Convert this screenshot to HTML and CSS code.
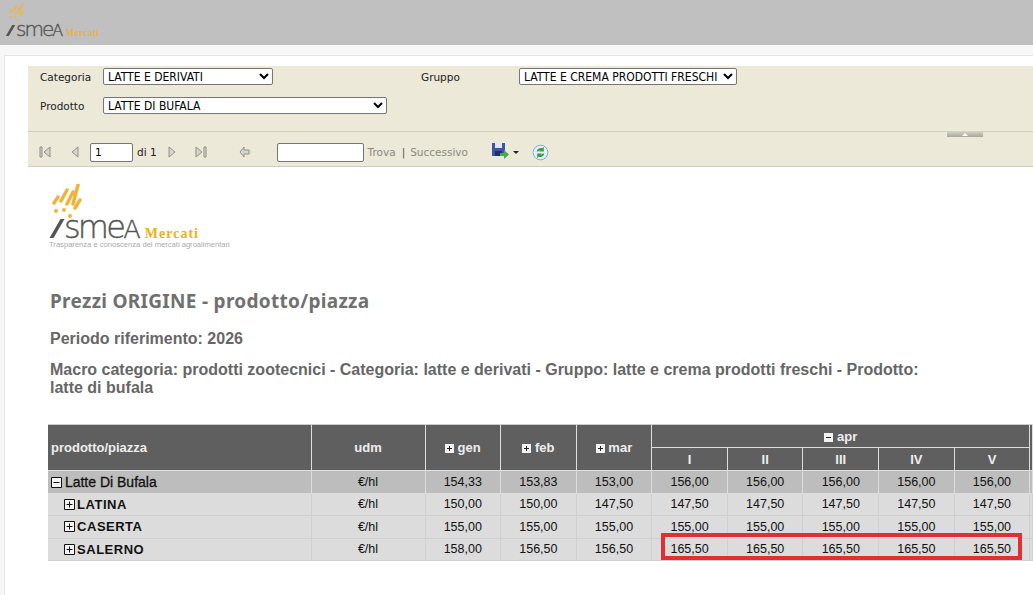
FILE: index.html
```html
<!DOCTYPE html>
<html lang="en">
<head>
  <meta charset="UTF-8">
  <title>Ismea Mercati</title>
  <link rel="stylesheet" href="styles.css">
</head>
<body>

  <header class="topbar">
    <div class="logo logo-small">
      <svg class="logo-rays" viewBox="0 0 32 36">
        <path d="M3 19 L7 13 M10 17 L16 6 M16 20 L22 8 M22 20 L27 1 M24 24 L29 16" />
        <circle cx="5" cy="27" r="2" /><circle cx="13" cy="26" r="2" /><circle cx="19" cy="32" r="2" />
      </svg>
      <div class="logo-line">
        <span class="logo-word"><i class="logo-slash"></i>sme<span class="logo-a">A</span></span>
        <span class="logo-mercati">Mercati</span>
      </div>
    </div>
  </header>

  <main class="page">
    <div class="panel">
      <section class="params">
        <label class="param-label">Categoria</label>
        <div class="param-field"><select class="sel sel-cat"><option>LATTE E DERIVATI</option></select></div>
        <label class="param-label">Gruppo</label>
        <div class="param-field"><select class="sel sel-gruppo"><option>LATTE E CREMA PRODOTTI FRESCHI</option></select></div>
        <label class="param-label">Prodotto</label>
        <div class="param-field"><select class="sel sel-prod"><option>LATTE DI BUFALA</option></select></div>
        <span class="collapse-tab"></span>
      </section>

      <nav class="toolbar">
        <svg class="tool-icon first" viewBox="0 0 14 14"><path class="bar" d="M2 2h2v10H2z"/><path class="arrow" d="M12 2v10L6 7z"/></svg>
        <svg class="tool-icon prev" viewBox="0 0 14 14"><path class="arrow" d="M10 2v10L4 7z"/></svg>
        <input class="page-input" type="text" value="1">
        <span class="page-of">di 1</span>
        <svg class="tool-icon next" viewBox="0 0 14 14"><path class="arrow" d="M4 2v10l6-5z"/></svg>
        <svg class="tool-icon last" viewBox="0 0 14 14"><path class="arrow" d="M2 2v10l6-5z"/><path class="bar" d="M10 2h2v10h-2z"/></svg>
        <svg class="tool-icon back" viewBox="0 0 14 14"><path class="arrow" d="M6 2v3h5v4H6v3L2 7z"/></svg>
        <input class="find-input" type="text">
        <span class="find-link">Trova</span>
        <span class="find-sep">|</span>
        <span class="find-link">Successivo</span>
        <svg class="save-icon" viewBox="0 0 18 18">
          <path fill="#3f54a8" d="M1 1h13v13H1z"/>
          <path fill="#dfe6f5" d="M4 1h7v5H4z"/>
          <path fill="#23306e" d="M4 9h7v5H4z"/>
          <path fill="#4ea84a" d="M9 11h4V8l5 4.500-5 4.500v-3H9z"/>
        </svg>
        <span class="caret"></span>
        <svg class="refresh-icon" viewBox="0 0 18 18">
          <circle cx="9" cy="9" r="7.800" fill="#e4eef8" stroke="#7fa6d6" />
          <path fill="#35a040" d="M5 8a4.500 4.500 0 0 1 6-3.500L12.500 3v5h-5l1.500-1.500A2.500 2.500 0 0 0 6.800 8z"/>
          <path fill="#35a040" d="M13 10a4.500 4.500 0 0 1-6 3.500L5.500 15v-5h5L9 11.500a2.500 2.500 0 0 0 2.200-1.500z"/>
        </svg>
      </nav>

      <section class="report">
        <div class="logo logo-big">
          <svg class="logo-rays" viewBox="0 0 32 36">
            <path d="M3 19 L7 13 M10 17 L16 6 M16 20 L22 8 M22 20 L27 1 M24 24 L29 16" />
            <circle cx="5" cy="27" r="2" /><circle cx="13" cy="26" r="2" /><circle cx="19" cy="32" r="2" />
          </svg>
          <div class="logo-line">
            <span class="logo-word"><i class="logo-slash"></i>sme<span class="logo-a">A</span></span>
            <span class="logo-mercati">Mercati</span>
          </div>
          <div class="logo-tag">Trasparenza e conoscenza dei mercati agroalimentari</div>
        </div>

        <h1 class="rep-title">Prezzi ORIGINE - prodotto/piazza</h1>
        <h2 class="rep-sub">Periodo riferimento: 2026</h2>
        <h2 class="rep-sub rep-macro">Macro categoria: prodotti zootecnici - Categoria: latte e derivati - Gruppo: latte e crema prodotti freschi - Prodotto: latte di bufala</h2>

        <div class="table-wrap">
          <table class="prices">
            <colgroup>
              <col class="c-name"><col class="c-udm">
              <col class="c-m"><col class="c-m"><col class="c-m">
              <col class="c-m"><col class="c-m"><col class="c-m"><col class="c-m"><col class="c-m">
              <col class="c-rest">
            </colgroup>
            <thead>
              <tr>
                <th rowspan="2" class="th-name">prodotto/piazza</th>
                <th rowspan="2">udm</th>
                <th rowspan="2"><svg class="tg tg-head" viewBox="0 0 9 9"><path d="M0 0h9v9H0z"/><path class="tg-mark" d="M2 4h5v1H2zM4 2h1v5H4z"/></svg> gen</th>
                <th rowspan="2"><svg class="tg tg-head" viewBox="0 0 9 9"><path d="M0 0h9v9H0z"/><path class="tg-mark" d="M2 4h5v1H2zM4 2h1v5H4z"/></svg> feb</th>
                <th rowspan="2"><svg class="tg tg-head" viewBox="0 0 9 9"><path d="M0 0h9v9H0z"/><path class="tg-mark" d="M2 4h5v1H2zM4 2h1v5H4z"/></svg> mar</th>
                <th colspan="5"><svg class="tg tg-head" viewBox="0 0 9 9"><path d="M0 0h9v9H0z"/><path class="tg-mark" d="M2 4h5v1H2z"/></svg> apr</th>
                <th rowspan="2"></th>
              </tr>
              <tr>
                <th>I</th><th>II</th><th>III</th><th>IV</th><th>V</th>
              </tr>
            </thead>
            <tbody>
              <tr class="row-total">
                <td class="td-name"><svg class="tg tg-row" viewBox="0 0 11 11"><path class="tg-box" d="M.5.500h10v10H.500z"/><path d="M2.500 5.500h6"/></svg> Latte Di Bufala</td>
                <td>€/hl</td><td>154,33</td><td>153,83</td><td>153,00</td>
                <td>156,00</td><td>156,00</td><td>156,00</td><td>156,00</td><td>156,00</td><td></td>
              </tr>
              <tr>
                <td class="td-name td-sub"><svg class="tg tg-row" viewBox="0 0 11 11"><path class="tg-box" d="M.5.500h10v10H.500z"/><path d="M2.500 5.500h6M5.500 2.500v6"/></svg> LATINA</td>
                <td>€/hl</td><td>150,00</td><td>150,00</td><td>147,50</td>
                <td>147,50</td><td>147,50</td><td>147,50</td><td>147,50</td><td>147,50</td><td></td>
              </tr>
              <tr>
                <td class="td-name td-sub"><svg class="tg tg-row" viewBox="0 0 11 11"><path class="tg-box" d="M.5.500h10v10H.500z"/><path d="M2.500 5.500h6M5.500 2.500v6"/></svg> CASERTA</td>
                <td>€/hl</td><td>155,00</td><td>155,00</td><td>155,00</td>
                <td>155,00</td><td>155,00</td><td>155,00</td><td>155,00</td><td>155,00</td><td></td>
              </tr>
              <tr>
                <td class="td-name td-sub"><svg class="tg tg-row" viewBox="0 0 11 11"><path class="tg-box" d="M.5.500h10v10H.500z"/><path d="M2.500 5.500h6M5.500 2.500v6"/></svg> SALERNO</td>
                <td>€/hl</td><td>158,00</td><td>156,50</td><td>156,50</td>
                <td>165,50</td><td>165,50</td><td>165,50</td><td>165,50</td><td>165,50</td><td></td>
              </tr>
            </tbody>
          </table>
          <div class="highlight"></div>
        </div>
      </section>
    </div>
  </main>

</body>
</html>
```

FILE: styles.css
```css
html, body {
  margin: 0;
  height: 595px;
  overflow: hidden;
  background: #f7f7f7;
  font-family: "Liberation Sans", Arial, sans-serif;
}

/* top bar */
.topbar {
  height: 45px;
  background: #c0c0c0;
  padding: 3px 0 0 6px;
  box-sizing: border-box;
}

.page {
  padding: 10px 0 0 4px;
}
.panel {
  background: #fff;
  border-left: 1px solid #e6e6e6;
  border-top: 1px solid #e6e6e6;
  padding: 10px 0 0 23px;
  height: 540px;
  box-sizing: border-box;
}

/* logo */
.logo-rays path {
  fill: none;
  stroke: #f2b33d;
  stroke-linecap: round;
}
.logo-rays circle {
  fill: #f2b33d;
}
.logo-line {
  display: flex;
  align-items: baseline;
}
.logo-word {
  font-family: "DejaVu Sans", sans-serif;
  font-weight: 200;
  color: #555;
  display: inline-block;
  -webkit-text-stroke: 0.400px #555;
}
.logo-slash {
  display: inline-block;
  background: #555;
  transform: skewX(-30deg);
}
.logo-a {
  font-size: 0.8em;
}
.logo-mercati {
  font-family: "Liberation Serif", serif;
  font-weight: bold;
  color: #f0b020;
}

.logo-small {
  width: 96px;
}
.logo-small .logo-rays {
  display: block;
  width: 17px;
  height: 19px;
  margin-left: 2px;
  opacity: 0.7;
}
.logo-small .logo-rays path {
  stroke-width: 3.5;
}
.logo-small .logo-line {
  margin-top: -3px;
  height: 20px;
}
.logo-small .logo-word {
  font-size: 20px;
  letter-spacing: -2px;
  line-height: 20px;
}
.logo-small .logo-slash {
  width: 3px;
  height: 11px;
  margin: 0 4px 0 3px;
}
.logo-small .logo-mercati {
  font-size: 9.500px;
  letter-spacing: 0.300px;
  margin-left: 4px;
  opacity: 0.75;
}

.logo-big {
  width: 200px;
  margin: 17px 0 0 21px;
}
.logo-big .logo-rays {
  display: block;
  width: 32px;
  height: 36px;
  margin-left: 2px;
}
.logo-big .logo-rays path {
  stroke-width: 3.5;
}
.logo-big .logo-line {
  margin-top: -5px;
  height: 25px;
}
.logo-big .logo-word {
  font-size: 32px;
  letter-spacing: -2.800px;
  line-height: 24px;
}
.logo-big .logo-slash {
  width: 4px;
  height: 19px;
  margin: 0 5px 0 6px;
}
.logo-big .logo-mercati {
  font-size: 14px;
  letter-spacing: 1px;
  margin-left: 7px;
}
.logo-tag {
  font-size: 7.600px;
  line-height: 9px;
  color: #aaa;
  white-space: nowrap;
}

/* parameter area */
.params {
  position: relative;
  display: grid;
  grid-template-columns: 63px 318px 98px 1fr;
  grid-template-rows: 21px 37px;
  align-items: center;
  height: 65px;
  padding-left: 12px;
  background: #ece9d8;
  border-bottom: 1px solid #cfcdbf;
  font-family: "DejaVu Sans", sans-serif;
  font-size: 10.500px;
  color: #222;
}
.param-field {
  display: flex;
}
.sel {
  height: 17px;
  box-sizing: border-box;
  font-family: "DejaVu Sans Condensed", "DejaVu Sans", sans-serif;
  font-size: 12px;
  background: #fff;
  color: #000;
  border: 1px solid #767676;
  border-radius: 2px;
  padding: 0;
}
.sel-cat {
  width: 170px;
}
.sel-prod {
  width: 284px;
}
.sel-gruppo {
  width: 218px;
}
.collapse-tab {
  position: absolute;
  top: 65px;
  left: 919px;
  width: 36px;
  height: 6px;
  background: linear-gradient(#d8d6ca, #a9a79c);
}
.collapse-tab::after {
  content: "";
  position: absolute;
  left: 15px;
  top: 2px;
  border: 3px solid transparent;
  border-top: 0;
  border-bottom-color: #fff;
}

/* toolbar */
.toolbar {
  display: flex;
  align-items: center;
  height: 35px;
  box-sizing: border-box;
  padding-top: 6px;
  background: #ece9d8;
  border-bottom: 1px solid #cfcdbf;
  font-family: "DejaVu Sans", sans-serif;
  font-size: 10.500px;
  color: #222;
}
.tool-icon {
  width: 14px;
  height: 14px;
  flex: none;
}
.tool-icon .arrow {
  fill: #d8d6ca;
  stroke: #8f8f86;
}
.tool-icon .bar {
  fill: #d8d6ca;
  stroke: #8f8f86;
}
.first { margin-left: 10px; }
.prev { margin-left: 16px; }
.page-input {
  width: 43px;
  height: 19px;
  box-sizing: border-box;
  margin-left: 8px;
  padding: 0 4px;
  border: 1px solid #767676;
  border-radius: 2px;
  font: inherit;
}
.page-of { margin-left: 4px; }
.next { margin-left: 8px; }
.last { margin-left: 15px; }
.back { margin-left: 30px; }
.find-input {
  width: 87px;
  height: 19px;
  box-sizing: border-box;
  margin-left: 25px;
  border: 1px solid #767676;
  border-radius: 2px;
}
.find-link {
  color: #8a8a80;
  margin-left: 4px;
}
.find-sep {
  color: #555;
  margin-left: 6px;
  margin-right: 1px;
}
.save-icon {
  width: 18px;
  height: 18px;
  margin-left: 23px;
  margin-top: -3px;
}
.caret {
  margin-left: 4px;
  border: 3px solid transparent;
  border-bottom: 0;
  border-top-color: #222;
}
.refresh-icon {
  width: 17px;
  height: 17px;
  margin-left: 13px;
}

/* report */
.report {
  color: #666;
}
.rep-title {
  margin: 41px 0 0 22px;
  font-family: "Noto Sans", sans-serif;
  font-size: 19px;
  letter-spacing: 0.300px;
  line-height: 22px;
  color: #707070;
}
.rep-sub {
  margin: 18px 0 0 22px;
  font-size: 16px;
  line-height: 18px;
}
.rep-macro {
  width: 880px;
  margin-top: 13px;
}

/* table */
.table-wrap {
  position: relative;
  margin: 27px 0 0 20px;
}
.prices {
  border-collapse: collapse;
  table-layout: fixed;
  width: 985px;
}
.c-name { width: 263px; }
.c-udm { width: 114px; }
.c-m { width: 75.600px; }
.prices th {
  background: #5f5f5f;
  color: #eee;
  font-size: 13px;
  font-weight: bold;
  border: 1px solid #ddd;
  padding: 0;
  height: 22px;
}
.prices thead tr:first-child th {
  border-top-color: #ccc;
}
.prices .th-name {
  text-align: left;
  padding-left: 3px;
  border-left: 0;
}
.prices td {
  box-sizing: border-box;
  background: #dcdcdc;
  color: #111;
  text-align: center;
  border: 1px solid #d0d0d0;
  padding: 0;
  height: 22.500px;
  font-size: 12.500px;
}
.prices .row-total td {
  background: #bdbdbd;
  border-color: #ddd;
}
.prices .td-name {
  text-align: left;
  padding-left: 3px;
  font-weight: bold;
  font-size: 13px;
  border-left: 0;
}
.prices .row-total .td-name {
  font-weight: normal;
  font-size: 14px;
  -webkit-text-stroke: 0.300px #111;
}
.prices .td-sub {
  padding-left: 16px;
  letter-spacing: 0.500px;
}
.tg {
  vertical-align: -1px;
}
.tg-head {
  width: 9px;
  height: 9px;
  fill: #f2f2f2;
}
.tg-mark {
  fill: #222;
}
.tg-row {
  width: 11px;
  height: 11px;
  margin-right: -1px;
  fill: none;
  stroke: #111;
}
.td-sub .tg-row {
  margin-right: -2px;
}
.tg-box {
  fill: #f4f4f4;
}

/* red marker over the last row */
.highlight {
  position: absolute;
  left: 613px;
  top: 109px;
  width: 353px;
  height: 19px;
  border: 4px solid #e03131;
}
```
